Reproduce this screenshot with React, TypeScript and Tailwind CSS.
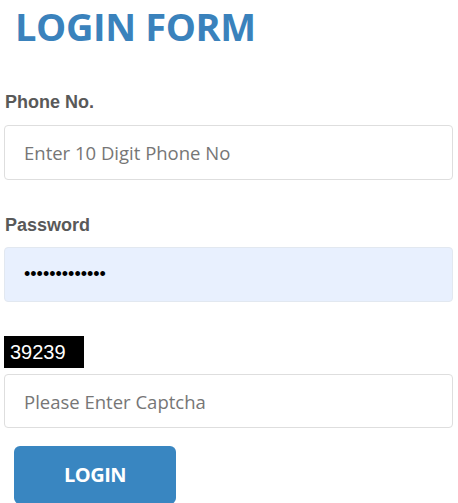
import React from "react";

export default function App() {
  return (
    <div className="w-[458px] h-[503px] overflow-hidden bg-white pl-[4px] pr-[5px]">
      <h1 className="mt-[4px] ml-[11px] text-[38px] leading-[44px] tracking-[-0.4px] font-bold text-[#3a82bc] font-['Open_Sans',sans-serif]">
        LOGIN FORM
      </h1>
      <label className="mt-[44px] block text-[18px] leading-[20px] font-bold text-[#595959] font-['Liberation_Sans',Arial,sans-serif] pl-[1px]">
        Phone No.
      </label>
      <input
        type="text"
        placeholder="Enter 10 Digit Phone No"
        className="mt-[13px] block w-full h-[55px] rounded-[4px] border border-[#dedede] bg-white px-[19px] text-[18.5px] font-['Open_Sans',sans-serif] text-[#333] placeholder:text-[#767676] outline-none"
      />
      <label className="mt-[35px] block text-[18px] leading-[20px] font-bold text-[#595959] font-['Liberation_Sans',Arial,sans-serif] pl-[1px]">
        Password
      </label>
      <input
        type="password"
        defaultValue="aaaaaaaaaaaaa"
        className="mt-[12px] block w-full h-[55px] rounded-[4px] border border-[#e2e8f0] bg-[#e8f0fe] px-[19px] text-[18px] font-['Liberation_Sans',Arial,sans-serif] text-black outline-none"
      />
      <div className="mt-[34px] flex h-[32px] w-[80px] items-center bg-black pl-[6px] text-[20px] text-white font-['Liberation_Sans',Arial,sans-serif]">
        39239
      </div>
      <input
        type="text"
        placeholder="Please Enter Captcha"
        className="mt-[6px] block w-full h-[54px] rounded-[4px] border border-[#dedede] bg-white px-[19px] text-[18.5px] font-['Open_Sans',sans-serif] text-[#333] placeholder:text-[#767676] outline-none"
      />
      <button
        type="button"
        className="mt-[18px] ml-[10px] flex h-[58px] w-[162px] items-center justify-center rounded-[6px] bg-[#3986c1] text-[20px] tracking-[-0.5px] font-bold text-white font-['Open_Sans',sans-serif]"
      >
        LOGIN
      </button>
    </div>
  );
}
